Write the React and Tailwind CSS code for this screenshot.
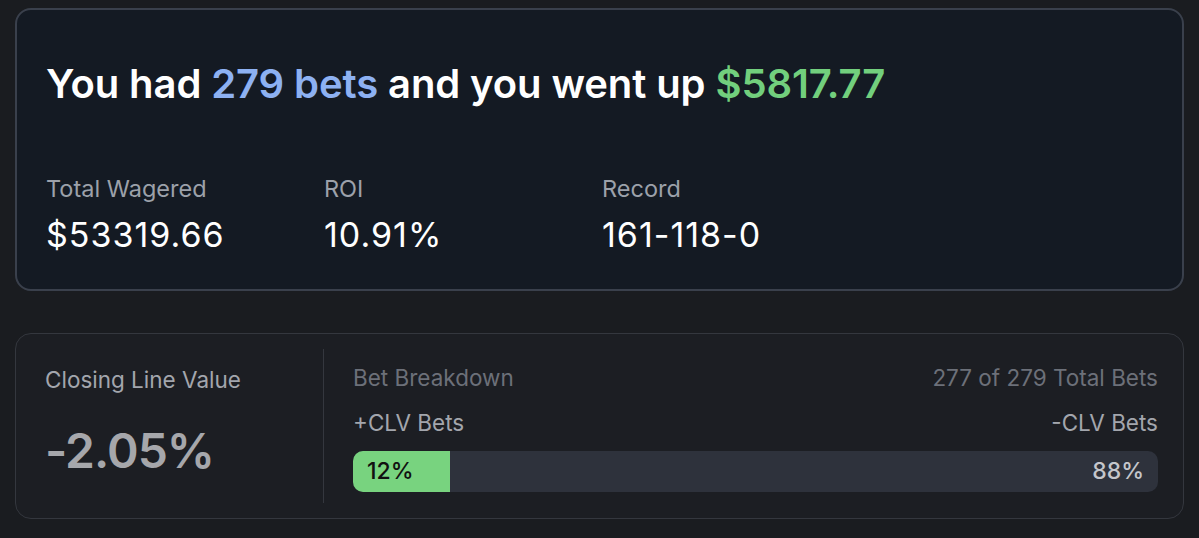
import React from "react";

const stats = [
  { label: "Total Wagered", value: "$53319.66" },
  { label: "ROI", value: "10.91%" },
  { label: "Record", value: "161-118-0" },
];

export default function App() {
  const positive = 12;
  return (
    <div
      className="min-h-[538px] bg-[#1a1c20] px-[15px] pt-[8px] pb-[18px]"
      style={{ fontFamily: "Inter, 'Noto Sans', sans-serif" }}
    >
      {/* Summary card */}
      <div className="rounded-[16px] border-2 border-[#3a404c] bg-[#141a23] pl-[29px] pt-[51px] pb-[36px]">
        <h1 className="text-[40px] leading-[46px] font-semibold text-white tracking-[-0.1px]">
          You had <span className="text-[#8db1f2]">279 bets</span> and you went up{" "}
          <span className="text-[#72cf7d]">$5817.77</span>
        </h1>
        <div className="mt-[68px] flex">
          {stats.map((s) => (
            <div key={s.label} className="w-[278px]">
              <div className="text-[23.5px] leading-[28px] text-[#9ca1aa]">{s.label}</div>
              <div className="mt-[14px] text-[34px] leading-[36px] text-white tracking-[1px]">{s.value}</div>
            </div>
          ))}
        </div>
      </div>

      {/* CLV card */}
      <div className="mt-[42px] flex rounded-[16px] border border-[#34373e] bg-[#1c1e23] py-[15px]">
        <div className="w-[308px] border-r border-[#34373e] pl-[29px] pt-[17px]">
          <div className="text-[22.5px] leading-[28px] text-[#a3a6ad]">Closing Line Value</div>
          <div className="mt-[29px] text-[48px] leading-[56px] font-semibold text-[#a6a7ab] tracking-[-1px]">
            -2.05%
          </div>
        </div>
        <div className="flex-1 pl-[29px] pr-[25px] pt-[15px] pb-[11px]">
          <div className="flex justify-between text-[22.5px] leading-[28px] text-[#6c7079]">
            <span>Bet Breakdown</span>
            <span>277 of 279 Total Bets</span>
          </div>
          <div className="mt-[17px] flex justify-between text-[22.5px] leading-[28px] text-[#a3a6ad]">
            <span>+CLV Bets</span>
            <span>-CLV Bets</span>
          </div>
          <div className="mt-[14px] flex h-[41px] overflow-hidden rounded-[10px] bg-[#2e323c]">
            <div
              className="flex items-center bg-[#78d37f] pl-[14px] text-[23px] font-medium text-[#111]"
              style={{ width: `${positive}%` }}
            >
              12%
            </div>
            <div className="flex flex-1 items-center justify-end pr-[14px] text-[23px] font-medium text-[#c4c6cb]">
              88%
            </div>
          </div>
        </div>
      </div>
    </div>
  );
}
